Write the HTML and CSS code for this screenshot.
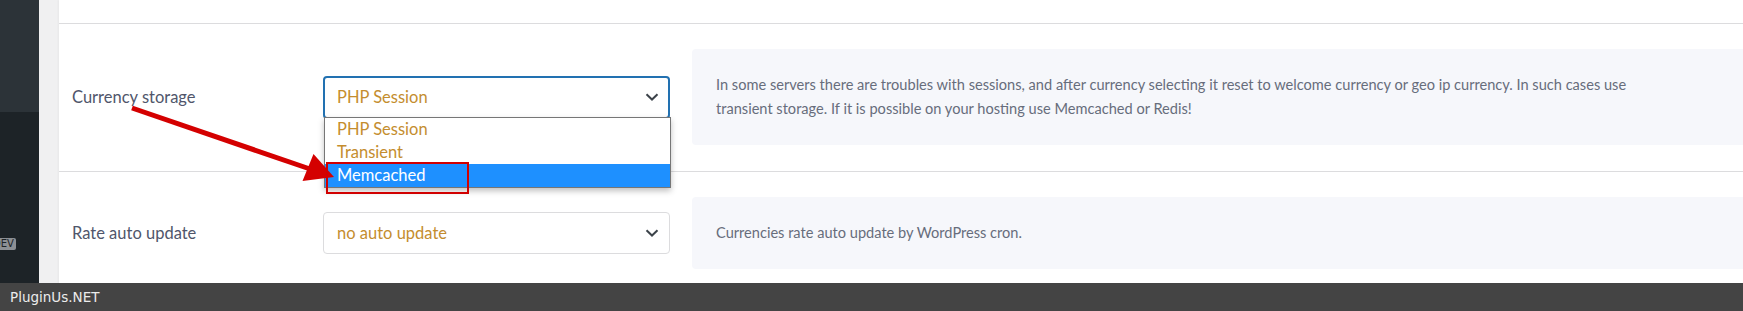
FILE: index.html
```html
<!DOCTYPE html>
<html lang="en">
<head>
    <meta charset="UTF-8">
    <meta name="viewport" content="width=device-width, initial-scale=1.0">
    <title>Currency storage - Options</title>
    <link rel="stylesheet" href="styles.css">
</head>
<body>
    <div class="sidebar">
        <div class="sidebar-top"></div>
        <span class="env-badge">DEV</span>
    </div>

    <div class="options-panel">
        <div class="option-row">
            <div class="option-label">Currency storage</div>
            <div class="select-field is-open">
                <span class="select-value">PHP Session</span>
                <svg class="chevron" width="14" height="8" viewBox="0 0 14 8">
                    <path d="M1.5 1.2 L7 6.5 L12.5 1.2" fill="none" stroke="#3c434a" stroke-width="2"/>
                </svg>
                <ul class="select-menu">
                    <li>PHP Session</li>
                    <li>Transient</li>
                    <li class="active">Memcached</li>
                </ul>
            </div>
            <div class="option-info">
                <p>In some servers there are troubles with sessions, and after currency selecting it reset to welcome currency or geo ip currency. In such cases use transient storage. If it is possible on your hosting use Memcached or Redis!</p>
            </div>
        </div>

        <div class="option-row">
            <div class="option-label">Rate auto update</div>
            <div class="select-field">
                <span class="select-value">no auto update</span>
                <svg class="chevron" width="14" height="8" viewBox="0 0 14 8">
                    <path d="M1.5 1.2 L7 6.5 L12.5 1.2" fill="none" stroke="#3c434a" stroke-width="2"/>
                </svg>
            </div>
            <div class="option-info">
                <p>Currencies rate auto update by WordPress cron.</p>
            </div>
        </div>
    </div>

    <!-- annotation drawn over the screenshot -->
    <svg class="annotation" width="1743" height="311" viewBox="0 0 1743 311">
        <line x1="132" y1="108" x2="310" y2="169" stroke="#d40000" stroke-width="5"/>
        <polygon points="334,177 302.5,181 313.5,154" fill="#d40000"/>
        <rect x="327" y="163" width="141" height="30" fill="none" stroke="#d10000" stroke-width="2"/>
    </svg>

    <div class="watermark">PluginUs.NET</div>
</body>
</html>
```

FILE: styles.css
```css
/* Base */
body {
    margin: 0;
    height: 311px;
    overflow: hidden;
    position: relative;
    display: flex;
    background-color: #f0f0f1;
    font-family: Lato, "Open Sans", sans-serif;
}

/* Admin sidebar strip */
.sidebar {
    width: 39px;
    flex: none;
    display: flex;
    flex-direction: column;
    background-color: #1d2327;
    overflow: hidden;
}

.sidebar-top {
    height: 112px;
    background-color: #2c3338;
}

.env-badge {
    align-self: flex-start;
    margin-top: 126px;
    margin-left: -9px;
    padding: 0 2px;
    height: 12px;
    line-height: 12px;
    font-family: "DejaVu Sans", sans-serif;
    font-size: 10px;
    color: #1d2327;
    background-color: #8c8f94;
    border-radius: 2px;
}

/* Options panel */
.options-panel {
    flex: 1;
    margin-left: 20px;
    padding-top: 23px;
    background-color: #fff;
    box-shadow: -1px 0 2px rgba(0, 0, 0, 0.04);
    min-width: 0;
}

.option-row {
    display: grid;
    grid-template-columns: 229px 347px 1fr;
    column-gap: 22px;
    align-items: center;
    padding: 25px 0 26px 13px;
    border-top: 1px solid #dcdcde;
}

.option-label {
    font-size: 16.5px;
    color: #50566b;
}

/* Select box */
.select-field {
    position: relative;
    height: 40px;
    display: flex;
    align-items: center;
    justify-content: space-between;
    padding: 0 10px 0 13px;
    border: 1px solid #dcdcde;
    border-radius: 4px;
    font-size: 16.5px;
    color: #c48d2e;
}

.select-field.is-open {
    height: 39px;
    padding: 0 9px 0 12px;
    border: 2px solid #2271b1;
}

.select-menu {
    position: absolute;
    top: 100%;
    left: -1px;
    width: 345px;
    margin: 0;
    padding: 0;
    list-style: none;
    background-color: #fff;
    border: 1px solid #767676;
    box-shadow: 0 3px 6px rgba(0, 0, 0, 0.25);
    z-index: 2;
}

.select-menu li {
    height: 23px;
    line-height: 23px;
    padding-left: 12px;
}

.select-menu li.active {
    background-color: #1e90ff;
    color: #fff;
}

/* Description box */
.option-info {
    padding: 24px 0 24px 24px;
    background-color: #f6f7fb;
    border-radius: 4px 0 0 4px;
}

.option-info p {
    margin: 0;
    max-width: 915px;
    font-size: 14.6px;
    line-height: 24px;
    color: #676d7c;
}

/* Overlays */
.annotation {
    position: absolute;
    top: 0;
    left: 0;
    pointer-events: none;
    z-index: 5;
}

.watermark {
    position: absolute;
    left: 0;
    right: 0;
    bottom: 0;
    height: 28px;
    line-height: 28px;
    padding-left: 10px;
    background-color: #444;
    color: #ececec;
    font-family: "DejaVu Sans", sans-serif;
    font-size: 13.5px;
    z-index: 6;
}
```
